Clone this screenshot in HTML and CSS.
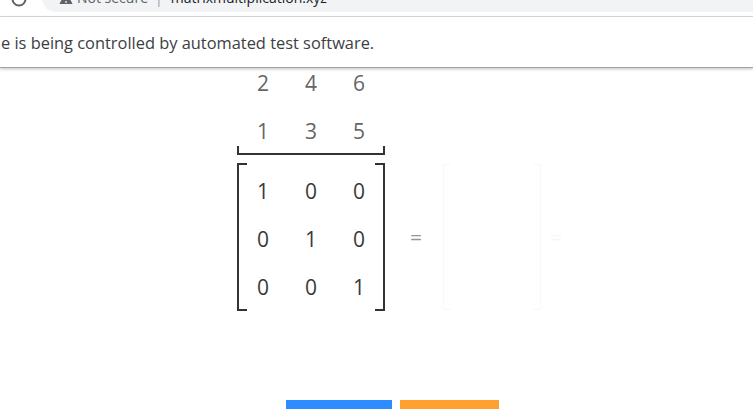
FILE: index.html
```html
<!DOCTYPE html>
<html>
<head>
<meta charset="utf-8">
<link rel="stylesheet" href="styles.css">
</head>
<body>
<div class="toolbar">
  <svg class="reload" width="20" height="20" viewBox="0 0 20 20"><path d="M3.5 10a6.5 6.5 0 1 0 13 0" fill="none" stroke="#5f6368" stroke-width="2"/></svg>
  <div class="omnibox">
    <svg class="warn" width="14" height="14" viewBox="0 0 14 14"><path d="M7 0.5L13.6 13H0.4Z" fill="#5f6368"/><rect x="6.2" y="10.2" width="1.6" height="1.6" fill="#f1f3f4"/><rect x="6.2" y="5" width="1.6" height="4" fill="#f1f3f4"/></svg>
    <span class="insecure">Not secure</span>
    <span class="sep">|</span>
    <span class="url">matrixmultiplication.xyz</span>
  </div>
</div>
<div class="infobar">
  <span class="info-text">e is being controlled by automated test software.</span>
</div>
<main class="stage">
  <div class="matrix-b">
    <div class="grid grid-b">
      <span>2</span><span>4</span><span>6</span>
      <span>1</span><span>3</span><span>5</span>
    </div>
    <div class="underbrace"></div>
  </div>
  <div class="equation">
    <div class="matrix-a">
      <span>1</span><span>0</span><span>0</span>
      <span>0</span><span>1</span><span>0</span>
      <span>0</span><span>0</span><span>1</span>
    </div>
    <div class="eq">=</div>
    <div class="result"></div>
    <div class="eq ghost">=</div>
  </div>
  <div class="buttons">
    <div class="btn btn-blue"></div>
    <div class="btn btn-orange"></div>
  </div>
</main>
</body>
</html>
```
FILE: styles.css
```css
html, body {
  margin: 0;
  padding: 0;
  background: #ffffff;
  overflow: hidden;
  font-family: "Open Sans", "Noto Sans", sans-serif;
}
body {
  width: 753px;
  height: 409px;
}
.toolbar {
  display: flex;
  align-items: center;
  height: 36px;
  margin-top: -19px;
  background: #ffffff;
  border-bottom: 1px solid #dadce0;
  box-sizing: border-box;
}
.reload {
  margin-left: 9px;
  flex: none;
}
.omnibox {
  display: flex;
  align-items: center;
  margin-left: 13px;
  flex: 1;
  height: 28px;
  margin-top: -2px;
  border-radius: 14px 0 0 14px;
  background: #f1f3f4;
  font-size: 14px;
  white-space: nowrap;
}
.warn {
  margin-left: 17px;
  flex: none;
}
.insecure {
  margin-left: 4px;
  color: #5f6368;
}
.sep {
  margin-left: 7px;
  color: #9aa0a6;
}
.url {
  margin-left: 8px;
  color: #202124;
}
.infobar {
  position: relative;
  height: 50px;
  display: flex;
  align-items: center;
  background: #ffffff;
  border-bottom: 1px solid #a3a3a3;
  box-shadow: 0 1px 3px rgba(0, 0, 0, 0.25);
  z-index: 1;
}
.info-text {
  margin-left: 1px;
  font-size: 16.4px;
  color: #3c4043;
  white-space: nowrap;
}
.stage {
  padding-left: 237px;
}
.matrix-b {
  width: 148px;
}
.grid {
  display: grid;
  grid-template-columns: repeat(3, 48px);
  margin-left: 2px;
}
.grid-b {
  grid-template-rows: 28px 28px;
  row-gap: 20px;
  margin-top: 1px;
  color: #666666;
  font-size: 21px;
  text-align: center;
  line-height: 28px;
}
.underbrace {
  height: 9px;
  margin-top: 1px;
  box-sizing: border-box;
  border-left: 2px solid #333333;
  border-right: 2px solid #333333;
  border-bottom: 2px solid #333333;
}
.equation {
  display: flex;
  align-items: center;
  margin-top: 8px;
}
.matrix-a {
  width: 148px;
  height: 148px;
  box-sizing: border-box;
  padding: 4px 2px 0;
  display: grid;
  grid-template-columns: repeat(3, 48px);
  grid-template-rows: repeat(3, 48px);
  font-size: 21px;
  line-height: 48px;
  text-align: center;
  color: #3a3a3a;
  background:
    linear-gradient(#333, #333) left top / 2px 100% no-repeat,
    linear-gradient(#333, #333) right top / 2px 100% no-repeat,
    linear-gradient(#333, #333) left top / 10px 2px no-repeat,
    linear-gradient(#333, #333) left bottom / 10px 2px no-repeat,
    linear-gradient(#333, #333) right top / 10px 2px no-repeat,
    linear-gradient(#333, #333) right bottom / 10px 2px no-repeat;
}
.eq {
  margin-left: 23px;
  width: 16px;
  text-align: center;
  font-size: 21px;
  color: #959595;
  line-height: 28px;
}
.result {
  margin-left: 19px;
  width: 98px;
  height: 146px;
  background:
    linear-gradient(#f8f8f8, #f8f8f8) left top / 1px 100% no-repeat,
    linear-gradient(#f8f8f8, #f8f8f8) right top / 1px 100% no-repeat,
    linear-gradient(#f8f8f8, #f8f8f8) left top / 8px 1px no-repeat,
    linear-gradient(#f8f8f8, #f8f8f8) left bottom / 8px 1px no-repeat,
    linear-gradient(#f8f8f8, #f8f8f8) right top / 8px 1px no-repeat,
    linear-gradient(#f8f8f8, #f8f8f8) right bottom / 8px 1px no-repeat;
}
.eq.ghost {
  margin-left: 7px;
  color: #f7f7f7;
}
.buttons {
  display: flex;
  gap: 8px;
  margin-top: 89px;
  margin-left: 49px;
}
.btn {
  height: 36px;
}
.btn-blue {
  width: 106px;
  background: #2d8cff;
}
.btn-orange {
  width: 99px;
  background: #ffa031;
}
```
